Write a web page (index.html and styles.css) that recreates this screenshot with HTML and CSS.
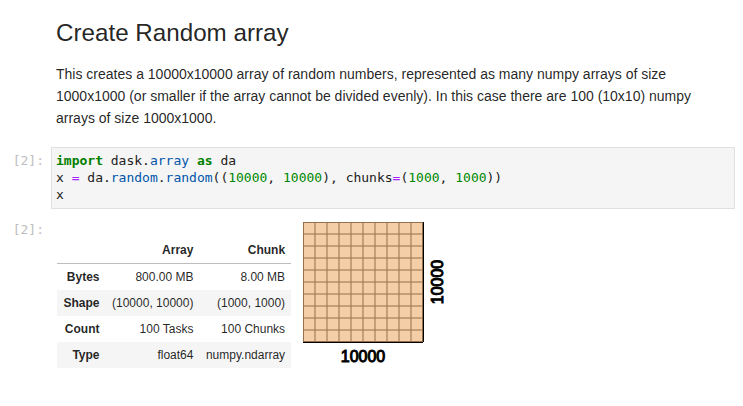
FILE: index.html
```html
<!DOCTYPE html>
<html>
<head>
<meta charset="utf-8">
<link rel="stylesheet" href="styles.css">
</head>
<body>
<div class="notebook">
  <div class="md">
    <h2 class="title">Create Random array</h2>
    <p class="lead">This creates a 10000x10000 array of random numbers, represented as many numpy arrays of size 1000x1000 (or smaller if the array cannot be divided evenly). In this case there are 100 (10x10) numpy arrays of size 1000x1000.</p>
  </div>

  <div class="cell">
    <div class="prompt">[2]:</div>
    <pre class="code"><span class="kw">import</span> dask.<span class="attr">array</span> <span class="kw">as</span> da
x <span class="op">=</span> da.<span class="attr">random</span>.<span class="attr">random</span>((<span class="num">10000</span>, <span class="num">10000</span>), chunks<span class="op">=</span>(<span class="num">1000</span>, <span class="num">1000</span>))
x</pre>
  </div>

  <div class="cell output">
    <div class="prompt out-prompt">[2]:</div>
    <div class="result">
      <table class="summary">
        <thead>
          <tr><td></td><th>Array</th><th>Chunk</th></tr>
        </thead>
        <tbody>
          <tr><th>Bytes</th><td>800.00 MB</td><td>8.00 MB</td></tr>
          <tr><th>Shape</th><td>(10000, 10000)</td><td>(1000, 1000)</td></tr>
          <tr><th>Count</th><td>100 Tasks</td><td>100 Chunks</td></tr>
          <tr><th>Type</th><td>float64</td><td>numpy.ndarray</td></tr>
        </tbody>
      </table>
      <svg class="chunks" width="170" height="170" style="stroke:rgb(0,0,0);stroke-width:1">
        <line x1="0" y1="0" x2="120" y2="0" style="stroke-width:2"/>
        <line x1="0" y1="12" x2="120" y2="12"/>
        <line x1="0" y1="24" x2="120" y2="24"/>
        <line x1="0" y1="36" x2="120" y2="36"/>
        <line x1="0" y1="48" x2="120" y2="48"/>
        <line x1="0" y1="60" x2="120" y2="60"/>
        <line x1="0" y1="72" x2="120" y2="72"/>
        <line x1="0" y1="84" x2="120" y2="84"/>
        <line x1="0" y1="96" x2="120" y2="96"/>
        <line x1="0" y1="108" x2="120" y2="108"/>
        <line x1="0" y1="120" x2="120" y2="120" style="stroke-width:2"/>
        <line x1="0" y1="0" x2="0" y2="120" style="stroke-width:2"/>
        <line x1="12" y1="0" x2="12" y2="120"/>
        <line x1="24" y1="0" x2="24" y2="120"/>
        <line x1="36" y1="0" x2="36" y2="120"/>
        <line x1="48" y1="0" x2="48" y2="120"/>
        <line x1="60" y1="0" x2="60" y2="120"/>
        <line x1="72" y1="0" x2="72" y2="120"/>
        <line x1="84" y1="0" x2="84" y2="120"/>
        <line x1="96" y1="0" x2="96" y2="120"/>
        <line x1="108" y1="0" x2="108" y2="120"/>
        <line x1="120" y1="0" x2="120" y2="120" style="stroke-width:2"/>
        <polygon points="0.0,0.0 120.0,0.0 120.0,120.0 0.0,120.0" style="fill:#ECB172A0;stroke-width:0"/>
        <text x="60" y="140" font-size="16" font-weight="100" text-anchor="middle">10000</text>
        <text x="140" y="60" font-size="16" font-weight="100" text-anchor="middle" transform="rotate(-90,140,60)">10000</text>
      </svg>
    </div>
  </div>
</div>
</body>
</html>
```

FILE: styles.css
```css
html, body {
  margin: 0;
  padding: 0;
  background: #ffffff;
}

body {
  font-family: "Liberation Sans", Arial, sans-serif;
  color: rgba(0, 0, 0, 0.87);
}

.notebook {
  width: 743px;
}

.md {
  padding-left: 56px;
  padding-right: 40px;
}

.title {
  margin: 0;
  padding-top: 18px;
  font-size: 24.2px;
  line-height: 29px;
  font-weight: normal;
}

.lead {
  margin: 15.6px 0 0 0;
  font-size: 14px;
  line-height: 22.4px;
}

.cell {
  display: flex;
  align-items: flex-start;
  margin-top: 17px;
}

.prompt {
  width: 44px;
  margin-right: 7px;
  flex: none;
  text-align: right;
  font-family: "DejaVu Sans Mono", monospace;
  font-size: 13px;
  line-height: 17px;
  color: #bdbdbd;
  padding-top: 5px;
}

.code {
  flex: 1;
  margin: 0 8px 0 0;
  padding: 4px 4px 5px 4px;
  background: #f5f5f5;
  border: 1px solid #e0e0e0;
  font-family: "DejaVu Sans Mono", monospace;
  font-size: 13px;
  line-height: 17px;
  color: #212121;
  white-space: pre;
}

.kw { color: #008000; font-weight: bold; }
.attr { color: #0055aa; }
.op { color: #aa22ff; }
.num { color: #008800; }

.output {
  margin-top: 7px;
}

.out-prompt {
  padding-top: 5px;
}

.result {
  display: flex;
  align-items: flex-start;
}

.summary {
  margin: 21px 6px 0 6px;
  border-collapse: collapse;
  border-spacing: 0;
  font-size: 12px;
  line-height: 14px;
  color: rgba(0, 0, 0, 0.87);
}

.summary th,
.summary td {
  padding: 6px 6px 6px 6.5px;
  text-align: right;
  vertical-align: middle;
  white-space: nowrap;
}

.summary th {
  font-weight: bold;
}

.summary thead tr {
  border-bottom: 1px solid #bdbdbd;
}

.summary tbody tr:nth-child(even) {
  background: #f5f5f5;
}

.chunks {
  margin: 6px 6px 0 6px;
  font-family: "Liberation Sans", Arial, sans-serif;
  flex: none;
}
```
